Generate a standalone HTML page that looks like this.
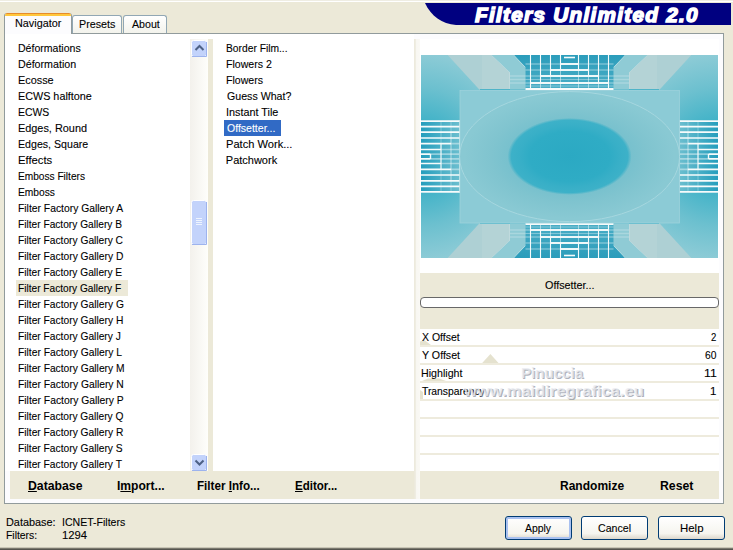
<!DOCTYPE html>
<html><head><meta charset="utf-8"><title>Filters Unlimited 2.0</title>
<style>
html,body{margin:0;padding:0;}
body{width:733px;height:550px;background:#ECE9D8;position:relative;overflow:hidden;font-family:"Liberation Sans",sans-serif;font-size:11px;color:#000;}
div,span{position:absolute;box-sizing:border-box;white-space:nowrap;}
.t{line-height:16px;height:16px;transform-origin:0 0;-webkit-text-stroke:0.1px currentColor;}
.bb{font-weight:bold;font-size:13px;line-height:16px;height:16px;transform-origin:0 0;}
.ban{height:24px;line-height:24px;font-size:19.5px;font-weight:bold;font-style:italic;-webkit-text-stroke:1.4px #fff;letter-spacing:1.2px;transform-origin:0 0;}
.wm{font-size:15px;font-weight:bold;line-height:16px;height:16px;color:rgba(232,234,239,.8);text-shadow:1px 1px 0 rgba(120,126,142,.6);transform-origin:0 0;}
.btn{border:1px solid #003C74;border-radius:3px;background:linear-gradient(#fff,#F6F5EF 75%,#DCD7CB);height:24px;top:516px;}
u{text-decoration:underline;}
</style></head><body>

<div style="left:0;top:0;width:733px;height:1px;background:#EFEDE3"></div><div style="left:0;top:1px;width:733px;height:1px;background:#FFFFFF"></div>
<svg style="position:absolute;left:420px;top:3px" width="313" height="23" viewBox="0 0 313 23"><path d="M5 0 H311 V22 H36 C22 21 11 13 5 0 Z" fill="#000080"/></svg>
<div style="left:4px;top:33px;width:720px;height:471px;background:#FCFCFE;border:1px solid #919B9C;"></div>
<div style="left:72px;top:15px;width:50px;height:18px;border:1px solid #91A7B4;border-bottom:none;border-radius:3px 3px 0 0;background:linear-gradient(#fff,#F3F3EC);"></div>
<div style="left:123px;top:15px;width:44px;height:18px;border:1px solid #91A7B4;border-bottom:none;border-radius:3px 3px 0 0;background:linear-gradient(#fff,#F3F3EC);"></div>
<div style="left:4px;top:13px;width:68px;height:22px;border:1px solid #919B9C;border-bottom:none;border-top:none;border-radius:3px 3px 0 0;background:#FCFCFE;overflow:hidden"><div style="left:-1px;top:0;width:68px;height:3px;background:#FFC73C;border-top:1px solid #E68B2C;border-radius:3px 3px 0 0"></div></div>
<div style="left:5px;top:34px;width:409px;height:437px;background:#fff"></div>
<div style="left:190px;top:39px;width:18px;height:432px;background:linear-gradient(90deg,#F3F1EC,#FEFEFB)"></div>
<div style="left:208px;top:39px;width:5px;height:432px;background:#ECE9D8"></div>
<svg style="position:absolute;left:191px;top:40px" width="17" height="17" viewBox="0 0 17 17"><rect x="0.5" y="0.5" width="15" height="16" rx="2" fill="#C3D3FB" stroke="#fff"/><path d="M1 16.5 H15.5 V2" fill="none" stroke="#9DB3EE"/><path d="M4.5 10 L8.5 6 L12.5 10" fill="none" stroke="#4D6185" stroke-width="2"/></svg>
<svg style="position:absolute;left:191px;top:454px" width="17" height="17" viewBox="0 0 17 17"><rect x="0.5" y="0.5" width="15" height="16" rx="2" fill="#C3D3FB" stroke="#fff"/><path d="M1 16.5 H15.5 V2" fill="none" stroke="#9DB3EE"/><path d="M4.5 6.5 L8.5 10.5 L12.5 6.5" fill="none" stroke="#4D6185" stroke-width="2"/></svg>
<svg style="position:absolute;left:191px;top:200px" width="17" height="46" viewBox="0 0 17 46"><rect x="0.5" y="0.5" width="15" height="44" rx="2" fill="#C3D3FB" stroke="#fff"/><path d="M1 44.5 H15.5 V2" fill="none" stroke="#9DB3EE"/><path d="M5 18.5h6M5 20.5h6M5 22.5h6M5 24.5h6" stroke="#EEF4FE"/></svg>
<div style="left:16px;top:280px;width:112px;height:16px;background:#ECE9D8"></div>
<div style="left:224px;top:120px;width:57px;height:16px;background:#316AC5"></div>
<div style="left:414px;top:39px;width:6px;height:460px;background:linear-gradient(90deg,#ECE9DB 0,#EFEDE2 1.5px,#F8F7F2 2.5px,#FAF9F5 6px)"></div>
<div style="left:420px;top:39px;width:299px;height:234px;background:#fff"></div>
<svg style="position:absolute;left:421px;top:55px" width="297" height="203" viewBox="0 0 297 203">
<defs>
<radialGradient id="gL" gradientUnits="userSpaceOnUse" cx="0" cy="101.5" r="120"><stop offset="0" stop-color="#35ADC6"/><stop offset="0.3" stop-color="#43B3C8"/><stop offset="0.575" stop-color="#6CC0CF"/><stop offset="0.85" stop-color="#8CCBD6"/><stop offset="1" stop-color="#95CED7"/></radialGradient>
<radialGradient id="gC" cx="0.5" cy="0.5" r="0.5"><stop offset="0" stop-color="#76C0CD"/><stop offset="0.55" stop-color="#76C0CD"/><stop offset="0.75" stop-color="#80C4CF"/><stop offset="1" stop-color="#89C9D3"/></radialGradient>
<radialGradient id="gD" cx="0.5" cy="0.5" r="0.5"><stop offset="0" stop-color="#2BA9C3"/><stop offset="0.65" stop-color="#2FACC5"/><stop offset="0.8" stop-color="#38AFC7"/><stop offset="0.94" stop-color="#3DB1C8"/><stop offset="1" stop-color="#3DB1C8" stop-opacity="0"/></radialGradient>
<linearGradient id="gS" x1="0" x2="1" y1="0" y2="0"><stop offset="0" stop-color="#259EBD"/><stop offset="1" stop-color="#6DBFCF"/></linearGradient>
<linearGradient id="gT" x1="0" x2="0" y1="0" y2="1"><stop offset="0" stop-color="#2B9DBB"/><stop offset="1" stop-color="#4BAEC6"/></linearGradient>
<g id="q">
 <rect x="0" y="0" width="149" height="102" fill="url(#gL)"/>
 <polygon points="26.6,0 70.6,0 89,17.4 89,34.5 58.3,34.5" fill="#AED0D4"/>
 <polygon points="61,0 70.6,0 89,17.4 89,34.5 61,34.5" fill="#B6D4D7" fill-opacity="0.7"/>
 <path d="M70.6 0 L89 17.4 V34" stroke="#D3E5E7" stroke-width="0.8" fill="none"/>
 <path d="M59 34.6 H104.5" stroke="#4FB4C8" stroke-width="1.3" fill="none"/>
 <polygon points="70.6,0 93,0 104.5,12.3 104.5,34.5 89,34.5 89,17.4" fill="#8FCBD5"/>
 <path d="M93 0 L104.5 12.3" stroke="#E4F1F2" stroke-width="1" fill="none"/>
 <polygon points="93,0 149,0 149,34.5 104.5,34.5 104.5,12.3" fill="url(#gT)"/>
 <g stroke="#F6FBFB" fill="none">
  <path d="M109.5 0 V34 M119.5 0 V28 M129.5 0 V21 M139.5 0 V15" stroke-width="1.1"/>
  <path d="M119.5 28 V34 M129.5 21 V34 M139.5 15 V34" stroke-width="1" stroke-opacity="0.5"/>
  <path d="M104.5 28 H149 M104.5 21 H149 M104.5 15 H149 M104.5 9 H149" stroke-width="1.6" stroke-opacity="0.35"/>
  <path d="M109.5 28 H149 M119.5 21 H149 M129.5 15 H149 M139.5 9 H149" stroke-width="2" stroke-opacity="0.95"/>
  <path d="M104.5 34 H149" stroke-width="1.8"/>
  <path d="M143 2.5 H149" stroke-width="1.6"/>
  <path d="M104.5 24.5 H149 M104.5 31 H149" stroke-width="1" stroke-opacity="0.35"/>
  <path d="M89 21 H104.5 M89 28 H104.5 M89 24.5 H104.5" stroke-width="1.5" stroke-opacity="0.25"/>
 </g>
 <rect x="0" y="65" width="39.5" height="37" fill="url(#gS)"/>
 <g stroke="#F6FBFB" fill="none" stroke-width="1.7">
  <path d="M0 66.2 H39 M0 71.6 H39 M0 77.2 H39 M0 83 H39"/>
  <path d="M0 88.7 H30 M0 94.5 H20 M0 99.2 H9.5"/>
  <path d="M30 88.7 H39 M20 94.5 H39 M9.5 99.2 H39" stroke-opacity="0.45"/>
  <path d="M9.5 99 V102" stroke-width="1.4"/>
  <path d="M20 88.5 V102" stroke-width="1.2"/>
  <path d="M30 77 V102" stroke-width="1" stroke-opacity="0.6"/>
  <path d="M38.9 65 V102" stroke-width="1.2"/>
  <path d="M20 66 V88 M30 66 V77" stroke-width="1" stroke-opacity="0.3"/>
 </g>
</g>
</defs>
<use href="#q"/>
<use href="#q" transform="translate(297,0) scale(-1,1)"/>
<use href="#q" transform="translate(0,203) scale(1,-1)"/>
<use href="#q" transform="translate(297,203) scale(-1,-1)"/>
<rect x="39" y="35.5" width="219.5" height="132.5" fill="#8CCBD6" stroke="#9DD2DB" stroke-width="0.8"/>
<ellipse cx="148.6" cy="101.6" rx="110" ry="65" fill="#89C9D3" stroke="#A6D7DF" stroke-width="1"/>
<ellipse cx="148.6" cy="101.6" rx="105" ry="62" fill="url(#gC)"/>
<ellipse cx="148.6" cy="101.4" rx="62" ry="38.5" fill="url(#gD)"/>
</svg>
<div style="left:420px;top:273px;width:299px;height:56px;background:#ECE9D8"></div>
<div style="left:420px;top:297px;width:299px;height:11px;border:1px solid #686868;border-radius:4px;background:#fff"></div>
<div style="left:420px;top:329px;width:299px;height:142px;background:#EEEBDD"></div>
<div style="left:420px;top:329px;width:299px;height:16px;background:#fff"></div>
<div style="left:420px;top:347px;width:299px;height:16px;background:#fff"></div>
<div style="left:420px;top:365px;width:299px;height:16px;background:#fff"></div>
<div style="left:420px;top:383px;width:299px;height:16px;background:#fff"></div>
<div style="left:420px;top:401px;width:299px;height:16px;background:#fff"></div>
<div style="left:420px;top:419px;width:299px;height:16px;background:#fff"></div>
<div style="left:420px;top:437px;width:299px;height:16px;background:#fff"></div>
<div style="left:420px;top:455px;width:299px;height:16px;background:#fff"></div>
<svg style="position:absolute;left:420px;top:329px" width="299" height="72" viewBox="0 0 299 72"><g fill="#E5E2CF"><polygon points="0,12.5 4.2,11 11,16 0,16"/><polygon points="62.2,34 78.5,34 70.4,25"/><polygon points="2,52 8,49.5 19,49.5 26,52"/><polygon points="0,61 3,63 3,70 0,70"/></g></svg>
<div style="left:10px;top:471px;width:404px;height:28px;background:#ECE9D8"></div>
<div style="left:420px;top:471px;width:299px;height:28px;background:#ECE9D8"></div>
<div class="btn" style="left:505px;width:67px;box-shadow:inset 0 0 0 2px #A9C1F0"></div>
<div class="btn" style="left:581px;width:67px"></div>
<div class="btn" style="left:658px;width:67px"></div>
<div style="left:0;top:547px;width:733px;height:1px;background:#C9C6B6"></div><div style="left:0;top:548px;width:733px;height:1px;background:#7A786E"></div><div style="left:0;top:549px;width:733px;height:1px;background:#55544E"></div>
<div id="t0" class="ban" style="left:475.00px;top:3px;transform:scaleX(1.0638);color:#fff">Filters Unlimited 2.0</div>
<div id="t1" class="t" style="left:14.72px;top:15px;transform:scaleX(0.9848);">Navigator</div>
<div id="t2" class="t" style="left:78.52px;top:16px;transform:scaleX(0.9778);">Presets</div>
<div id="t3" class="t" style="left:132.00px;top:16px;transform:scaleX(0.9655);">About</div>
<div id="t4" class="t" style="left:17.74px;top:40px;transform:scaleX(0.9578);">Déformations</div>
<div id="t5" class="t" style="left:17.73px;top:56px;transform:scaleX(0.9707);">Déformation</div>
<div id="t6" class="t" style="left:17.71px;top:72px;transform:scaleX(0.9886);">Ecosse</div>
<div id="t7" class="t" style="left:17.72px;top:88px;transform:scaleX(0.9811);">ECWS halftone</div>
<div id="t8" class="t" style="left:17.75px;top:104px;transform:scaleX(0.9469);">ECWS</div>
<div id="t9" class="t" style="left:17.71px;top:120px;transform:scaleX(0.9897);">Edges, Round</div>
<div id="t10" class="t" style="left:17.73px;top:136px;transform:scaleX(0.9653);">Edges, Square</div>
<div id="t11" class="t" style="left:17.68px;top:152px;transform:scaleX(1.0250);">Effects</div>
<div id="t12" class="t" style="left:17.78px;top:168px;transform:scaleX(0.9208);">Emboss Filters</div>
<div id="t13" class="t" style="left:17.77px;top:184px;transform:scaleX(0.9308);">Emboss</div>
<div id="t14" class="t" style="left:17.76px;top:200px;transform:scaleX(0.9396);">Filter Factory Gallery A</div>
<div id="t15" class="t" style="left:17.78px;top:216px;transform:scaleX(0.9243);">Filter Factory Gallery B</div>
<div id="t16" class="t" style="left:17.77px;top:232px;transform:scaleX(0.9286);">Filter Factory Gallery C</div>
<div id="t17" class="t" style="left:17.77px;top:248px;transform:scaleX(0.9313);">Filter Factory Gallery D</div>
<div id="t18" class="t" style="left:17.77px;top:264px;transform:scaleX(0.9261);">Filter Factory Gallery E</div>
<div id="t19" class="t" style="left:17.78px;top:280px;transform:scaleX(0.9216);">Filter Factory Gallery F</div>
<div id="t20" class="t" style="left:17.77px;top:296px;transform:scaleX(0.9313);">Filter Factory Gallery G</div>
<div id="t21" class="t" style="left:17.77px;top:312px;transform:scaleX(0.9313);">Filter Factory Gallery H</div>
<div id="t22" class="t" style="left:17.77px;top:328px;transform:scaleX(0.9294);">Filter Factory Gallery J</div>
<div id="t23" class="t" style="left:17.77px;top:344px;transform:scaleX(0.9345);">Filter Factory Gallery L</div>
<div id="t24" class="t" style="left:17.77px;top:360px;transform:scaleX(0.9319);">Filter Factory Gallery M</div>
<div id="t25" class="t" style="left:17.76px;top:376px;transform:scaleX(0.9357);">Filter Factory Gallery N</div>
<div id="t26" class="t" style="left:17.76px;top:392px;transform:scaleX(0.9396);">Filter Factory Gallery P</div>
<div id="t27" class="t" style="left:17.77px;top:408px;transform:scaleX(0.9274);">Filter Factory Gallery Q</div>
<div id="t28" class="t" style="left:17.77px;top:424px;transform:scaleX(0.9313);">Filter Factory Gallery R</div>
<div id="t29" class="t" style="left:17.77px;top:440px;transform:scaleX(0.9306);">Filter Factory Gallery S</div>
<div id="t30" class="t" style="left:17.77px;top:456px;transform:scaleX(0.9306);">Filter Factory Gallery T</div>
<div id="t31" class="t" style="left:225.87px;top:40px;transform:scaleX(0.9328);">Border Film...</div>
<div id="t32" class="t" style="left:225.84px;top:56px;transform:scaleX(0.9609);">Flowers 2</div>
<div id="t33" class="t" style="left:225.84px;top:72px;transform:scaleX(0.9595);">Flowers</div>
<div id="t34" class="t" style="left:226.80px;top:88px;transform:scaleX(0.9652);">Guess What?</div>
<div id="t35" class="t" style="left:225.82px;top:104px;transform:scaleX(0.9846);">Instant Tile</div>
<div id="t36" class="t" style="left:226.80px;top:120px;transform:scaleX(0.9560);color:#fff">Offsetter...</div>
<div id="t37" class="t" style="left:225.79px;top:136px;transform:scaleX(1.0094);">Patch Work...</div>
<div id="t38" class="t" style="left:225.80px;top:152px;transform:scaleX(1.0000);">Patchwork</div>
<div id="t39" class="t" style="left:545.00px;top:277px;transform:scaleX(0.9800);">Offsetter...</div>
<div id="t40" class="t" style="left:422.30px;top:329px;transform:scaleX(0.9525);">X Offset</div>
<div id="t41" class="t" style="left:711.30px;top:329px;transform:scaleX(0.8667);">2</div>
<div id="t42" class="t" style="left:422.30px;top:347px;transform:scaleX(0.9667);">Y Offset</div>
<div id="t43" class="t" style="left:705.30px;top:347px;transform:scaleX(0.9333);">60</div>
<div id="t44" class="t" style="left:421.33px;top:365px;transform:scaleX(0.9690);">Highlight</div>
<div id="t45" class="t" style="left:704.18px;top:365px;transform:scaleX(1.1200);">11</div>
<div id="t46" class="t" style="left:422.30px;top:383px;transform:scaleX(0.9388);">Transparency</div>
<div id="t47" class="t" style="left:710.26px;top:383px;transform:scaleX(1.0400);">1</div>
<div id="t48" class="wm" style="left:520.79px;top:365px;transform:scaleX(1.0066);">Pinuccia</div>
<div id="t49" class="wm" style="left:464.00px;top:383px;transform:scaleX(1.1049);">www.maidiregrafica.eu</div>
<div id="t50" class="bb" style="left:27.60px;top:478px;transform:scaleX(0.9421);"><u>D</u>atabase</div>
<div id="t51" class="bb" style="left:117.37px;top:478px;transform:scaleX(0.9280);">I<u>m</u>port...</div>
<div id="t52" class="bb" style="left:196.50px;top:478px;transform:scaleX(0.8956);">Filter <u>I</u>nfo...</div>
<div id="t53" class="bb" style="left:294.60px;top:478px;transform:scaleX(0.8872);"><u>E</u>ditor...</div>
<div id="t54" class="bb" style="left:560.18px;top:478px;transform:scaleX(0.9250);">Randomize</div>
<div id="t55" class="bb" style="left:659.66px;top:478px;transform:scaleX(0.9441);">Reset</div>
<div id="t56" class="t" style="left:5.51px;top:514px;transform:scaleX(0.9896);">Database:</div>
<div id="t57" class="t" style="left:62.04px;top:514px;transform:scaleX(0.9585);">ICNET-Filters</div>
<div id="t58" class="t" style="left:5.66px;top:527px;transform:scaleX(0.9419);">Filters:</div>
<div id="t59" class="t" style="left:62.48px;top:527px;transform:scaleX(1.0217);">1294</div>
<div id="t60" class="t" style="left:524.80px;top:520px;transform:scaleX(0.9464);">Apply</div>
<div id="t61" class="t" style="left:598.40px;top:520px;transform:scaleX(0.9647);">Cancel</div>
<div id="t62" class="t" style="left:679.76px;top:520px;transform:scaleX(1.0381);">Help</div>
</body></html>
